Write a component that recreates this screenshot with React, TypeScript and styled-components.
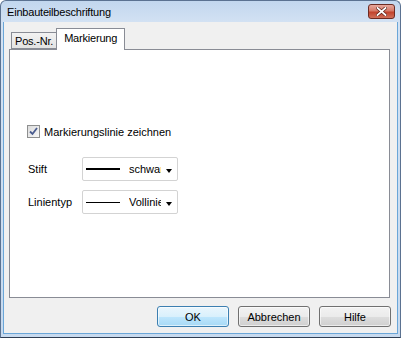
import React, { useState } from "react";
import styled, { createGlobalStyle } from "styled-components";

const GlobalStyle = createGlobalStyle`
  html, body {
    margin: 0;
    padding: 0;
    background: #ffffff;
  }
  body {
    font-family: "Liberation Sans", Arial, sans-serif;
    font-size: 11px;
    color: #000;
  }
`;

const Window = styled.div`
  width: 401px;
  height: 338px;
  box-sizing: border-box;
  display: flex;
  flex-direction: column;
  background: linear-gradient(to bottom, #c2d7ee 0px, #d3e2f3 22px, #c7daef 100%);
  border: 1px solid #5b7291;
  border-bottom-color: #2e3d52;
  border-radius: 6px 6px 0 0;
`;

const TitleBar = styled.div`
  height: 21px;
  display: flex;
  align-items: center;
  justify-content: space-between;
  padding-left: 6px;
  padding-right: 5px;
`;

const Title = styled.span`
  font-size: 11px;
  color: #000;
  letter-spacing: -0.2px;
`;

const CloseButton = styled.div`
  width: 27px;
  height: 15px;
  box-sizing: border-box;
  border: 1px solid #6d2b22;
  border-radius: 3px;
  background: linear-gradient(to bottom, #e7a89d 0%, #d57a68 45%, #c2432d 55%, #d0705a 100%);
  display: flex;
  align-items: center;
  justify-content: center;
`;

const Client = styled.div`
  flex: 1;
  margin: 0 2px 3px 2px;
  background: #f0f0f0;
  border: 1px solid #6aa6d8;
  border-top: none;
  display: flex;
  flex-direction: column;
  padding: 6px 0 0 5px;
`;

const TabStrip = styled.div`
  display: flex;
  align-items: flex-end;
  height: 21px;
  padding-left: 2px;
`;

const Tab = styled.div<{ $active?: boolean }>`
  box-sizing: border-box;
  height: ${(p) => (p.$active ? "22px" : "17px")};
  margin-bottom: ${(p) => (p.$active ? "-1px" : "0")};
  padding: ${(p) => (p.$active ? "3px 7px 0 7px" : "2px 3px 0 3px")};
  border: 1px solid #898c95;
  border-bottom: ${(p) => (p.$active ? "none" : "1px solid #898c95")};
  background: ${(p) => (p.$active ? "#ffffff" : "linear-gradient(to bottom, #f2f2f2, #e3e3e3)")};
  position: relative;
  z-index: ${(p) => (p.$active ? 2 : 1)};
  margin-left: ${(p) => (p.$active ? "-1px" : "0")};
  letter-spacing: -0.2px;
  white-space: nowrap;
  cursor: default;
`;

const Panel = styled.div`
  width: 381px;
  height: 249px;
  box-sizing: border-box;
  border: 1px solid #898c95;
  background: #ffffff;
  padding: 75px 0 0 17px;
  display: flex;
  flex-direction: column;
`;

const CheckRow = styled.label`
  display: flex;
  align-items: center;
  gap: 4px;
  height: 13px;
  margin-bottom: 19px;
`;

const CheckBox = styled.span`
  width: 13px;
  height: 13px;
  box-sizing: border-box;
  border: 1px solid #8e8f8f;
  background: linear-gradient(135deg, #dcdcdc, #f7f7f7);
  display: flex;
  align-items: center;
  justify-content: center;
`;

const FieldRow = styled.div`
  display: flex;
  align-items: center;
  height: 24px;
  margin-bottom: 9px;
`;

const FieldLabel = styled.span`
  width: 54px;
  padding-left: 1px;
`;

const Select = styled.div`
  width: 96px;
  height: 24px;
  box-sizing: border-box;
  border: 1px solid #d3d3d3;
  border-radius: 2px;
  background: #fff;
  display: flex;
  align-items: center;
  padding-left: 3px;
  overflow: hidden;
`;

const LineSample = styled.span<{ $weight: number }>`
  width: 34px;
  height: ${(p) => p.$weight}px;
  background: #000;
  flex: none;
`;

const SelectText = styled.span`
  width: 32px;
  margin-left: 9px;
  overflow: hidden;
  white-space: nowrap;
  flex: none;
`;

const Arrow = styled.span`
  margin-left: 5px;
  width: 0;
  height: 0;
  border-left: 3.5px solid transparent;
  border-right: 3.5px solid transparent;
  border-top: 4px solid #000;
  margin-top: 3px;
`;

const ButtonRow = styled.div`
  display: flex;
  justify-content: flex-end;
  gap: 9px;
  margin-top: 8px;
  padding-right: 6px;
`;

const Button = styled.button<{ $default?: boolean }>`
  width: 72px;
  height: 21px;
  box-sizing: border-box;
  font-family: "Liberation Sans", Arial, sans-serif;
  font-size: 11px;
  color: #000;
  padding: 0;
  border-radius: 3px;
  border: 1px solid ${(p) => (p.$default ? "#3c7fb1" : "#707070")};
  background: ${(p) =>
    p.$default
      ? "linear-gradient(to bottom, #eaf6fd 0%, #d9f0fc 50%, #bee6fd 51%, #a7d9f5 100%)"
      : "linear-gradient(to bottom, #f2f2f2 0%, #ebebeb 50%, #dddddd 51%, #cfcfcf 100%)"};
  box-shadow: inset 0 0 0 1px rgba(255, 255, 255, 0.6);
`;

export default function App() {
  const [tab, setTab] = useState(1);
  const [checked, setChecked] = useState(true);

  return (
    <>
      <GlobalStyle />
      <Window>
        <TitleBar>
          <Title>Einbauteilbeschriftung</Title>
          <CloseButton>
            <svg width="11" height="9" viewBox="0 0 11 9">
              <path d="M1.5 1 L9.5 8 M9.5 1 L1.5 8" stroke="#5a1d14" strokeWidth="3.2" strokeLinecap="square" />
              <path d="M1.5 1 L9.5 8 M9.5 1 L1.5 8" stroke="#ffffff" strokeWidth="1.8" strokeLinecap="square" />
            </svg>
          </CloseButton>
        </TitleBar>
        <Client>
          <TabStrip>
            <Tab $active={tab === 0} onClick={() => setTab(0)}>Pos.-Nr.</Tab>
            <Tab $active={tab === 1} onClick={() => setTab(1)}>Markierung</Tab>
          </TabStrip>
          <Panel>
            <CheckRow onClick={() => setChecked(!checked)}>
              <CheckBox>
                {checked && (
                  <svg width="9" height="9" viewBox="0 0 9 9">
                    <path d="M1 4.5 L3.5 7 L8 1" fill="none" stroke="#4a5c8f" strokeWidth="1.8" />
                  </svg>
                )}
              </CheckBox>
              Markierungslinie zeichnen
            </CheckRow>
            <FieldRow>
              <FieldLabel>Stift</FieldLabel>
              <Select>
                <LineSample $weight={2} />
                <SelectText>schwarz</SelectText>
                <Arrow />
              </Select>
            </FieldRow>
            <FieldRow>
              <FieldLabel>Linientyp</FieldLabel>
              <Select>
                <LineSample $weight={1} />
                <SelectText>Vollinie</SelectText>
                <Arrow />
              </Select>
            </FieldRow>
          </Panel>
          <ButtonRow>
            <Button $default>OK</Button>
            <Button>Abbrechen</Button>
            <Button>Hilfe</Button>
          </ButtonRow>
        </Client>
      </Window>
    </>
  );
}
